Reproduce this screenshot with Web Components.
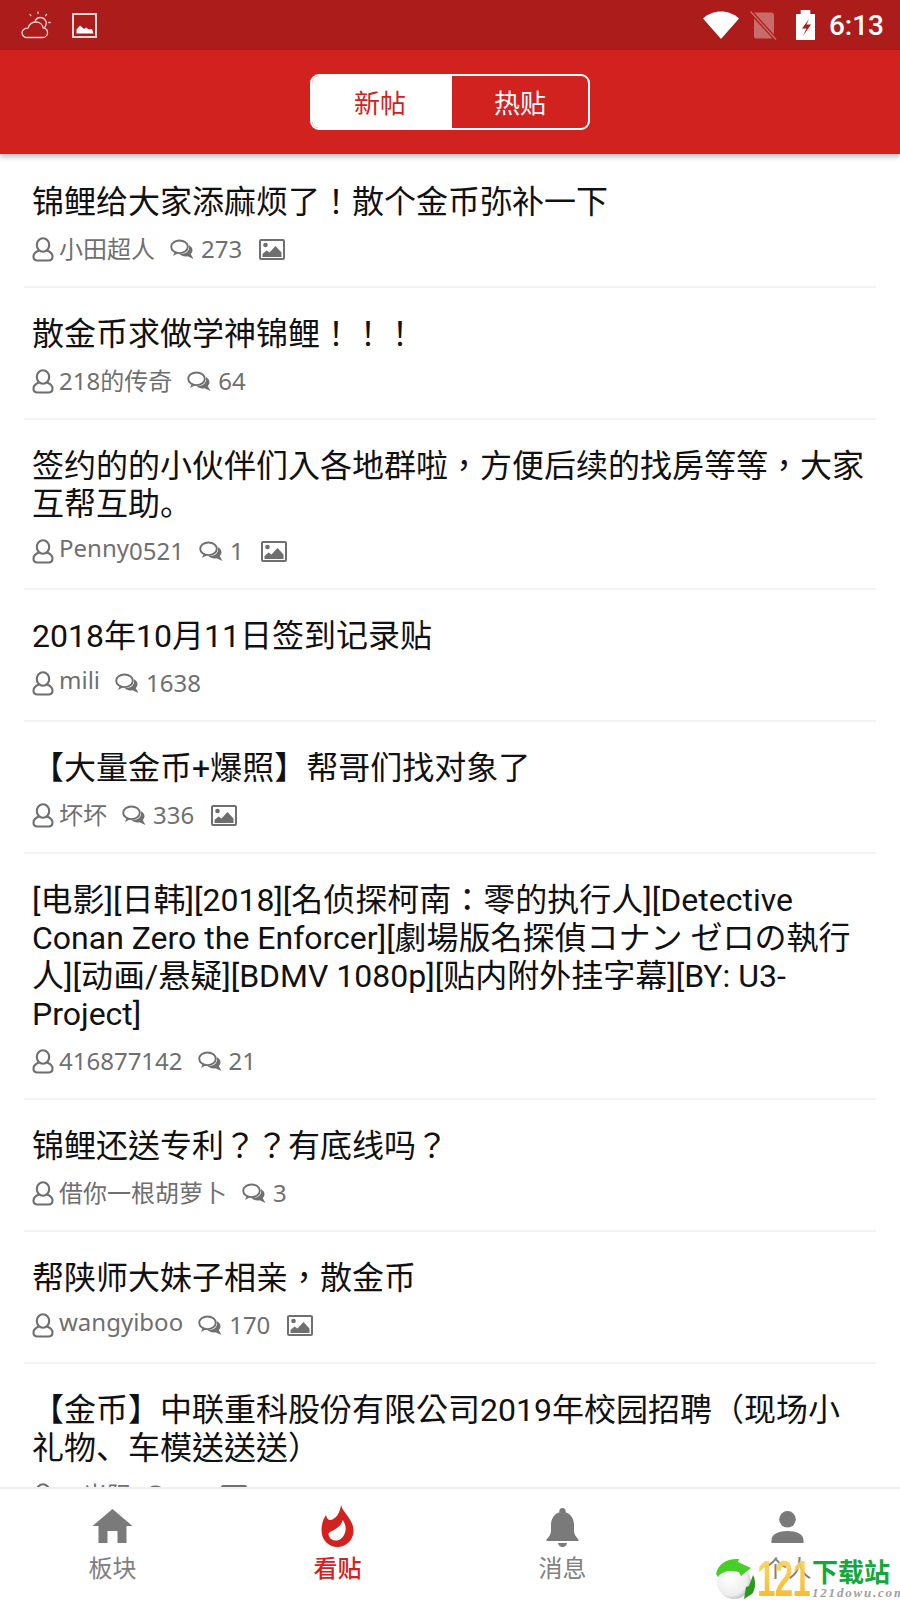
<!DOCTYPE html>
<html>
<head>
<meta charset="utf-8">
<style>
  html, body { margin: 0; padding: 0; background: #fff; }
  body { width: 900px; height: 1600px; overflow: hidden; font-family: "Roboto", "Noto Sans CJK TC", sans-serif; }
  .page { display: flex; flex-direction: column; width: 900px; height: 1600px; }
  .sc { font-family: "Noto Sans CJK SC", sans-serif; line-height: 0; }
</style>
</head>
<body>
<div class="page">
  <status-bar></status-bar>
  <top-bar></top-bar>
  <post-list>
    <post-item author="小田超人" comments="273" pic>锦鲤给大家添麻烦了！散个金币弥补一下</post-item>
    <post-item author="218的传奇" comments="64">散金币求做学神锦鲤！！！</post-item>
    <post-item author="Penny0521" comments="1" pic>签约的的小伙伴们入各地群啦，方便后续的找房等等，大家互帮互助<span class="sc">。</span></post-item>
    <post-item author="mili" comments="1638">2018年10月11日签到记录贴</post-item>
    <post-item author="坏坏" comments="336" pic>【大量金币+爆照】帮哥们找对象了</post-item>
    <post-item author="416877142" comments="21">[电影][日韩][2018][名侦探柯南：零的执行人][Detective Conan Zero the Enforcer][劇場版名探偵コナン ゼロの執行人][动画/悬疑][BDMV 1080p][贴内附外挂字幕][BY: U3-Project]</post-item>
    <post-item author="借你一根胡萝卜" comments="3">锦鲤还送专利？？有底线吗？</post-item>
    <post-item author="wangyiboo" comments="170" pic>帮陕师大妹子相亲，散金币</post-item>
    <post-item author="一米阳" comments="30" pic>【金币】中联重科股份有限公司2019年校园招聘（现场小礼物<span class="sc">、</span>车模送送送）</post-item>
  </post-list>
  <tab-bar></tab-bar>
</div>
<script>
const statusTemplate = document.createElement('template');
statusTemplate.innerHTML = `
<style>
  :host { display: flex; flex: none; align-items: center; height: 50px; background: #ab1c1a; color: #fff; padding: 0 16px 0 21px; box-sizing: border-box; }
  .gap { flex: 1; }
  svg { display: block; }
  .time { font: 500 28px "Roboto", sans-serif; margin-left: 14px; }
</style>
<svg width="30" height="28" viewBox="0 0 30 28" fill="none" stroke="#f0d6d5" stroke-width="1.300" stroke-linecap="round">
  <path d="M6 26.500h15.500c3 0 5-2.200 5-4.800 0-2.500-1.800-4.500-4.300-4.800C21.500 13.500 18.500 11 15 11c-3.800 0-7 2.600-8 6.200C3.400 17.200 1 19 1 21.700 1 24.500 3.500 26.500 6 26.500Z"/>
  <path d="M14 10.500c.8-2.400 3-4 5.500-4 3.200 0 5.800 2.600 5.800 5.800 0 1.500-.6 2.800-1.500 3.900"/>
  <path d="M17 1v1.400M9 3.500l.8 1.200M25.500 3.500l-.9 1.200M27.700 11.500h1.500"/>
</svg>
<svg style="margin-left:21px" width="25" height="25" viewBox="0 0 25 25">
  <rect x="1" y="1" width="23" height="23" fill="none" stroke="#f0d6d5" stroke-width="2"/>
  <path d="M4.500 20.500v-4l3.500-4 4 3.500 2-1.500 3 2 3-.5 1.500 4.500Z" fill="#fff"/>
</svg>
<div class="gap"></div>
<svg width="36" height="28" viewBox="0 0 36 28"><path d="M0 7.500C4.500 3.200 11 .5 18 .5S31.500 3.200 36 7.500L18 28Z" fill="#fff"/></svg>
<svg style="margin-left:11px" width="27" height="29" viewBox="0 0 27 29">
  <path d="M4 1.500h17a3 3 0 0 1 3 3v21a2 2 0 0 1-2 2H6a2 2 0 0 1-2-2Z" fill="#c96b69"/>
  <path d="M0 0 26 28.500" stroke="#ab1c1a" stroke-width="4"/>
  <path d="M.5 .5 26 28.500" stroke="#c96b69" stroke-width="1.500"/>
</svg>
<svg style="margin-left:19px" width="19" height="30" viewBox="0 0 19 30">
  <path d="M4.700 0h9.600v4H19v26H0V4h4.700Z" fill="#fff"/>
  <path d="M13 9 6 18.500h4.500L7 26l8-11.500h-4.500L13 9Z" fill="#ab1c1a"/>
</svg>
<span class="time">6:13</span>
`;
class StatusBar extends HTMLElement {
  connectedCallback() {
    this.attachShadow({ mode: 'open' });
    this.shadowRoot.appendChild(statusTemplate.content.cloneNode(true));
  }
}
customElements.define('status-bar', StatusBar);

const topTemplate = document.createElement('template');
topTemplate.innerHTML = `
<style>
  :host { display: flex; flex: none; justify-content: center; align-items: center; height: 104px; background: #d12220; box-shadow: 0 3px 5px rgba(0,0,0,.25); position: relative; z-index: 2; }
  .seg { display: flex; width: 280px; height: 56px; box-sizing: border-box; border: 2px solid #fff; border-radius: 9px; overflow: hidden; font: 26px/50px "Noto Sans CJK SC", sans-serif; }
  .seg div { display: flex; align-items: center; justify-content: center; box-sizing: border-box; }
  .on { width: 140px; padding-right: 4px; background: #fff; color: #d12220; }
  .off { flex: 1; color: #fff; }
</style>
<div class="seg"><div class="on">新帖</div><div class="off">热贴</div></div>
`;
class TopBar extends HTMLElement {
  connectedCallback() {
    this.attachShadow({ mode: 'open' });
    this.shadowRoot.appendChild(topTemplate.content.cloneNode(true));
  }
}
customElements.define('top-bar', TopBar);

const listTemplate = document.createElement('template');
listTemplate.innerHTML = `
<style>
  :host { display: block; flex: 1; min-height: 0; overflow: hidden; padding: 2px 24px 0; }
</style>
<slot></slot>
`;
class PostList extends HTMLElement {
  connectedCallback() {
    this.attachShadow({ mode: 'open' });
    this.shadowRoot.appendChild(listTemplate.content.cloneNode(true));
  }
}
customElements.define('post-list', PostList);

const postTemplate = document.createElement('template');
postTemplate.innerHTML = `
<style>
  :host { display: block; padding: 27px 8px 20px; border-bottom: 2px solid #f3f3f3; }
  .title { font: 32px/38px "Roboto", "Noto Sans CJK TC", sans-serif; color: #111; word-break: break-word; }
  .meta { display: flex; align-items: center; height: 34px; margin-top: 11px; color: #6f6f6f; font: 24px/34px "Noto Sans", "Noto Sans CJK SC", sans-serif; }
  .meta svg { flex: none; display: block; }
  .who { margin-left: 5px; height: 34px; }
  .who b { font-weight: 400; vertical-align: 3px; line-height: 20px; }
  .bubble { margin-left: 15px; }
  .num { margin-left: 7px; }
  .pic { margin-left: 17px; }
</style>
<div class="title"><slot></slot></div>
<div class="meta">
  <svg width="22" height="25" viewBox="0 0 22 25" fill="none" stroke="#6f6f6f" stroke-width="2.100">
    <ellipse cx="11" cy="8" rx="6.200" ry="6.800"/>
    <path d="M7 13.500C3.500 14.800 1.500 16.500 1.500 19.500c0 2.800 1.500 4 4 4h11c2.500 0 4-1.200 4-4 0-3-2-4.700-5.500-6"/>
  </svg>
  <span class="who"></span>
  <svg class="bubble" width="24" height="21" viewBox="0 0 24 21">
    <ellipse cx="9.500" cy="7.800" rx="8.300" ry="6.300" fill="none" stroke="#6f6f6f" stroke-width="1.900"/>
    <path d="M5 12.500 3 17l5.500-3Z" fill="#6f6f6f"/>
    <path d="M18.800 6c1.800 1 3.700 2.900 3.700 5.300 0 1.500-.7 2.800-1.800 3.800L23.500 20l-6-2.800c-3.200.6-5.900-.2-8-2.200 4.500.3 8.100-1.200 9.300-4.500.4-1.200.4-3 0-4.500Z" fill="#6f6f6f"/>
  </svg>
  <span class="num"></span>
  <svg class="pic" width="26" height="21" viewBox="0 0 26 21">
    <rect x="1" y="1" width="24" height="19" rx="1" fill="none" stroke="#6f6f6f" stroke-width="2"/>
    <circle cx="6.500" cy="6" r="2.300" fill="#6f6f6f"/>
    <path d="M3.500 18v-3l4-3.500 3 2L16.500 7l6 6.500V18Z" fill="#6f6f6f"/>
  </svg>
</div>
`;
class PostItem extends HTMLElement {
  connectedCallback() {
    this.attachShadow({ mode: 'open' });
    this.shadowRoot.appendChild(postTemplate.content.cloneNode(true));
    // latin letters sit a little above the digits in the app's fallback font
    const who = this.shadowRoot.querySelector('.who');
    this.getAttribute('author').split(/([A-Za-z]+)/).forEach((part, i) => {
      if (!part) return;
      if (i % 2) {
        const b = document.createElement('b');
        b.textContent = part;
        who.appendChild(b);
      } else {
        who.appendChild(document.createTextNode(part));
      }
    });
    this.shadowRoot.querySelector('.num').textContent = this.getAttribute('comments');
    if (!this.hasAttribute('pic')) this.shadowRoot.querySelector('.pic').remove();
  }
}
customElements.define('post-item', PostItem);

const tabBarTemplate = document.createElement('template');
tabBarTemplate.innerHTML = `
<style>
  :host { display: grid; flex: none; grid-template-columns: repeat(4, 1fr); height: 113px; background: #fff; border-top: 2px solid #eee; box-sizing: border-box; position: relative; z-index: 2; }
</style>
<tab-item label="板块">
  <svg width="44" height="44" viewBox="0 0 44 44"><path d="M21.500 5 41.500 22H35.500V39H26.500V27H16.500V39H7.500V22H1.500Z" fill="#7a7a7a"/></svg>
</tab-item>
<tab-item label="看贴" active>
  <svg width="44" height="44" viewBox="0 0 44 44"><path fill-rule="evenodd" d="M25 1C27 9 37.500 15 37.500 27 37.500 36 30 43 21.500 43 12.500 43 5.500 36 5.500 26 5.500 19 8 14 10 11 10.500 14 12 16 14.500 16 20 15 24 9 25 1ZM26.500 16C30 20 30.500 26 28.500 30 26.500 35 22 37 19 36.500 15 36 12.500 33 12.500 29.500 15 26 25 25 26.500 16Z" fill="#d12220"/></svg>
</tab-item>
<tab-item label="消息">
  <svg width="44" height="44" viewBox="0 0 44 44"><path d="M21.500 4a3.200 3.200 0 0 1 3 4.300C30 10 33 15 33 21v6c0 3 2 6 4.500 8.500V37H5.500v-1.500C8 33 10 30 10 27v-6c0-6 3-11 8.500-12.700A3.200 3.200 0 0 1 21.500 4ZM17 39h9c-.5 2.500-2 4-4.500 4s-4-1.500-4.500-4Z" fill="#7a7a7a"/></svg>
</tab-item>
<tab-item label="个人">
  <svg width="44" height="44" viewBox="0 0 44 44"><circle cx="21.500" cy="15.300" r="8.300" fill="#7a7a7a"/><path d="M5.500 39v-3C5.500 30 13 27 21.500 27S37.500 30 37.500 36v3Z" fill="#7a7a7a"/></svg>
</tab-item>
<water-mark></water-mark>
`;
class TabBar extends HTMLElement {
  connectedCallback() {
    this.attachShadow({ mode: 'open' });
    this.shadowRoot.appendChild(tabBarTemplate.content.cloneNode(true));
  }
}
customElements.define('tab-bar', TabBar);

const tabItemTemplate = document.createElement('template');
tabItemTemplate.innerHTML = `
<style>
  :host { display: flex; flex-direction: column; align-items: center; padding-top: 15px; color: #808080; font: 24px "Noto Sans CJK SC", sans-serif; }
  :host([active]) { color: #d12220; font-weight: 500; }
  .icon { height: 44px; }
  ::slotted(svg) { display: block; }
  .label { line-height: 36px; margin-top: 1px; }
</style>
<div class="icon"><slot></slot></div>
<div class="label"></div>
`;
class TabItem extends HTMLElement {
  connectedCallback() {
    this.attachShadow({ mode: 'open' });
    this.shadowRoot.appendChild(tabItemTemplate.content.cloneNode(true));
    this.shadowRoot.querySelector('.label').textContent = this.getAttribute('label');
  }
}
customElements.define('tab-item', TabItem);

// watermark sits over the last tab, as in the screenshot
const markTemplate = document.createElement('template');
markTemplate.innerHTML = `
<style>
  :host { position: absolute; left: 715px; top: 68px; width: 185px; height: 43px; display: block; }
  svg { position: absolute; left: 0; top: 0; }
  .num { position: absolute; left: 42px; top: 0; font: 700 50px/44px "Liberation Sans", sans-serif; letter-spacing: -1px; transform: scaleX(.66); transform-origin: 0 0; background: linear-gradient(#fbd75e, #f6b21d); -webkit-background-clip: text; background-clip: text; color: transparent; opacity: .92; }
  .cn { position: absolute; left: 97px; top: 0; font: 700 26px/28px "Noto Sans CJK SC", sans-serif; color: #14a83a; }
  .url { position: absolute; left: 97px; top: 28px; font: italic 700 13px/15px "Liberation Serif", serif; color: #a0a0a0; letter-spacing: 1.800px; white-space: nowrap; }
</style>
<svg width="42" height="43" viewBox="0 0 42 43">
  <defs><radialGradient id="ball" cx=".4" cy=".4" r=".7"><stop offset="0" stop-color="#fff"/><stop offset=".7" stop-color="#eee"/><stop offset="1" stop-color="#aaa"/></radialGradient></defs>
  <circle cx="19" cy="25" r="17" fill="url(#ball)"/>
  <path d="M1 17C3 7 12 1 24 2l-1 3 13 6-10 8-2-4C15 13 7 14 3 20Z" fill="#47cf28"/>
  <path d="M38 18c3 6 3 14-1 19l-8 5 2-12 3-1Z" fill="#2a9a1c"/>
</svg>
<span class="num">121</span>
<span class="cn">下载站</span>
<span class="url">121dowu.com</span>
`;
class WaterMark extends HTMLElement {
  connectedCallback() {
    this.attachShadow({ mode: 'open' });
    this.shadowRoot.appendChild(markTemplate.content.cloneNode(true));
  }
}
customElements.define('water-mark', WaterMark);
</script>
</body>
</html>
